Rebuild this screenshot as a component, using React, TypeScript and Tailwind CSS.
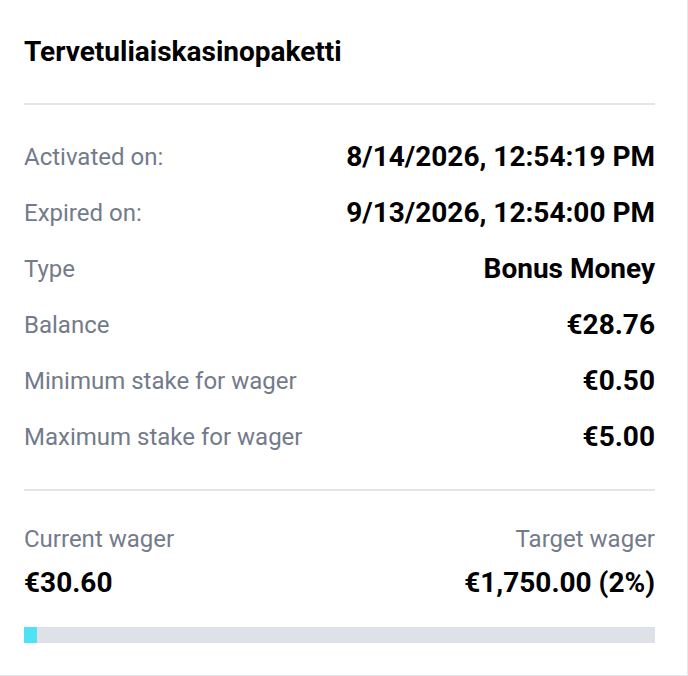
const rows = [
  { label: "Activated on:", value: "8/14/2026, 12:54:19 PM" },
  { label: "Expired on:", value: "9/13/2026, 12:54:00 PM" },
  { label: "Type", value: "Bonus Money" },
  { label: "Balance", value: "€28.76" },
  { label: "Minimum stake for wager", value: "€0.50" },
  { label: "Maximum stake for wager", value: "€5.00" },
];

export default function App() {
  const progress = 2;
  return (
    <div className="min-h-screen bg-white font-['Roboto','Liberation_Sans',sans-serif]">
      <div className="w-[688px] h-[676px] bg-white border-r border-b border-[#e5e7eb] pl-6 pr-8 flex flex-col">
        {/* Header */}
        <div className="h-[103px] flex items-center">
          <h2 className="text-[28px] leading-9 font-bold text-black">Tervetuliaiskasinopaketti</h2>
        </div>
        <div className="h-[2px] bg-[#e4e5e8]" />

        {/* Details */}
        <div className="pt-6 pb-6">
          {rows.map((r) => (
            <div key={r.label} className="h-[56px] flex items-center justify-between">
              <span className="text-2xl leading-8 text-[#737b8b]">{r.label}</span>
              <span className="text-[28px] leading-9 font-bold text-black">{r.value}</span>
            </div>
          ))}
        </div>
        <div className="h-[2px] bg-[#e4e5e8]" />

        {/* Wager */}
        <div className="pt-8 flex justify-between">
          <div className="flex flex-col gap-[10px]">
            <span className="text-2xl leading-8 text-[#737b8b]">Current wager</span>
            <span className="text-[28px] leading-9 font-bold text-black">€30.60</span>
          </div>
          <div className="flex flex-col gap-[10px] items-end">
            <span className="text-2xl leading-8 text-[#737b8b]">Target wager</span>
            <span className="text-[28px] leading-9 font-bold text-black">€1,750.00 ({progress}%)</span>
          </div>
        </div>
        <div className="mt-[26px] h-4 bg-[#dfe1e8]">
          <div className="h-full bg-[#4de3f5]" style={{ width: `${progress}%` }} />
        </div>
      </div>
    </div>
  );
}
